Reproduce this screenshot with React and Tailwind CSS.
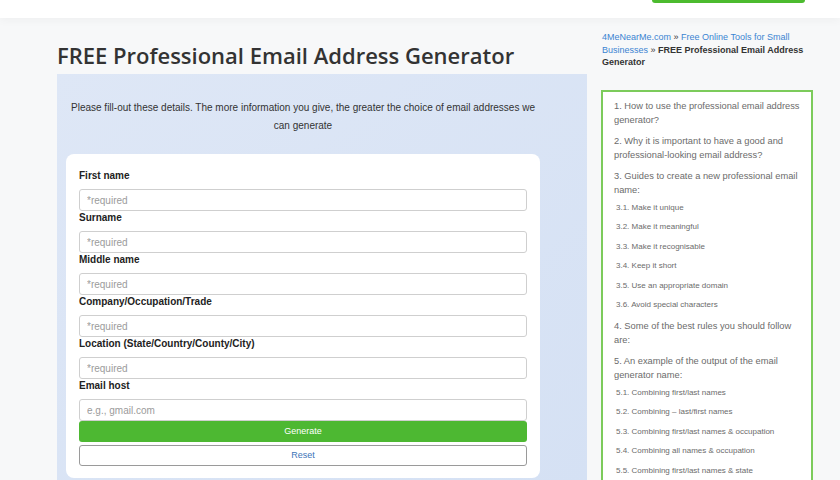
import React from 'react'

const fields = [
  { label: 'First name', placeholder: '*required' },
  { label: 'Surname', placeholder: '*required' },
  { label: 'Middle name', placeholder: '*required' },
  { label: 'Company/Occupation/Trade', placeholder: '*required' },
  { label: 'Location (State/Country/County/City)', placeholder: '*required' },
  { label: 'Email host', placeholder: 'e.g., gmail.com' },
]

const toc = [
  { n: '1.', text: 'How to use the professional email address generator?' },
  { n: '2.', text: 'Why it is important to have a good and professional-looking email address?' },
  {
    n: '3.',
    text: 'Guides to create a new professional email name:',
    sub: [
      ['3.1.', 'Make it unique'],
      ['3.2.', 'Make it meaningful'],
      ['3.3.', 'Make it recognisable'],
      ['3.4.', 'Keep it short'],
      ['3.5.', 'Use an appropriate domain'],
      ['3.6.', 'Avoid special characters'],
    ],
  },
  { n: '4.', text: 'Some of the best rules you should follow are:' },
  {
    n: '5.',
    text: 'An example of the output of the email generator name:',
    sub: [
      ['5.1.', 'Combining first/last names'],
      ['5.2.', 'Combining – last/first names'],
      ['5.3.', 'Combining first/last names & occupation'],
      ['5.4.', 'Combining all names & occupation'],
      ['5.5.', 'Combining first/last names & state'],
    ],
  },
]

function Field({ label, placeholder }) {
  return (
    <div>
      <div className="text-[10px] leading-[14px] font-bold text-[#222] mb-[6px]">{label}</div>
      <input
        className="block w-full h-[22px] border border-[#cfcfcf] rounded-[3px] bg-white px-[7px] text-[10px] placeholder:text-[#9b9b9b] outline-none"
        placeholder={placeholder}
      />
    </div>
  )
}

export default function App() {
  return (
    <div className="w-[840px] h-[480px] overflow-hidden bg-[#f7f8f9] font-['Liberation_Sans',Arial,sans-serif]">
      {/* top bar, scrolled mostly out of view */}
      <div className="h-[18px] bg-white shadow-[0_3px_8px_rgba(0,0,0,0.035)] flex justify-end pr-[35px]">
        <div className="w-[153px] h-[3px] bg-[#4cbb2f] rounded-b-[3px]" />
      </div>

      <div className="flex pl-[57px] gap-[14px]">
        {/* main column */}
        <div className="w-[530px]">
          <h1 className="mt-[23px] mb-[5px] text-[22px] leading-[28px] font-semibold text-[#333] font-['Open_Sans','Noto_Sans',sans-serif]">
            FREE Professional Email Address Generator
          </h1>
          <div className="bg-gradient-to-br from-[#dee7f6] to-[#d5e1f4] pt-[25px] pl-[9px] pr-[47px] pb-[10px]">
            <p className="text-center text-[10px] leading-[18px] text-[#333] mb-[19px]">
              Please fill-out these details. The more information you give, the greater the choice of email addresses we
              can generate
            </p>
            <div className="bg-white rounded-[8px] px-[13px] pt-[15px] pb-[12px]">
              {fields.map((f) => (
                <Field key={f.label} {...f} />
              ))}
              <button className="block w-full h-[21px] bg-[#4db832] rounded-[3px] text-white text-[9px]">Generate</button>
              <button className="block w-full h-[21px] mt-[3px] border border-[#9a9a9a] rounded-[3px] bg-white text-[#3d74b8] text-[9px]">
                Reset
              </button>
            </div>
          </div>
        </div>

        {/* sidebar */}
        <div className="w-[212px] pt-[13px]">
          <div className="text-[9px] leading-[12.5px] text-[#333] mb-[21px] pl-[1px]">
            <div>
              <a className="text-[#3b84d2]">4MeNearMe.com</a> » <a className="text-[#3b84d2]">Free Online Tools for Small</a>
            </div>
            <div>
              <a className="text-[#3b84d2]">Businesses</a> » <b>FREE Professional Email Address</b>
            </div>
            <div>
              <b>Generator</b>
            </div>
          </div>
          <div className="border-2 border-[#7ccb5b] bg-white pt-[7px] pl-[11px] pr-[6px] pb-[20px]">
            {toc.map((item) => (
              <div key={item.n} className={item.sub ? 'mb-[1px]' : 'mb-[7px]'}>
                <div className="text-[9.3px] leading-[14px] text-[#6b6b6b]">{`${item.n} ${item.text}`}</div>
                {item.sub && (
                  <div className="mt-[1px] mb-[4px]">
                    {item.sub.map(([n, t]) => (
                      <div key={n} className="pl-[2px] text-[8px] leading-[19.5px] text-[#6b6b6b]">
                        {`${n} ${t}`}
                      </div>
                    ))}
                  </div>
                )}
              </div>
            ))}
          </div>
        </div>
      </div>
    </div>
  )
}
